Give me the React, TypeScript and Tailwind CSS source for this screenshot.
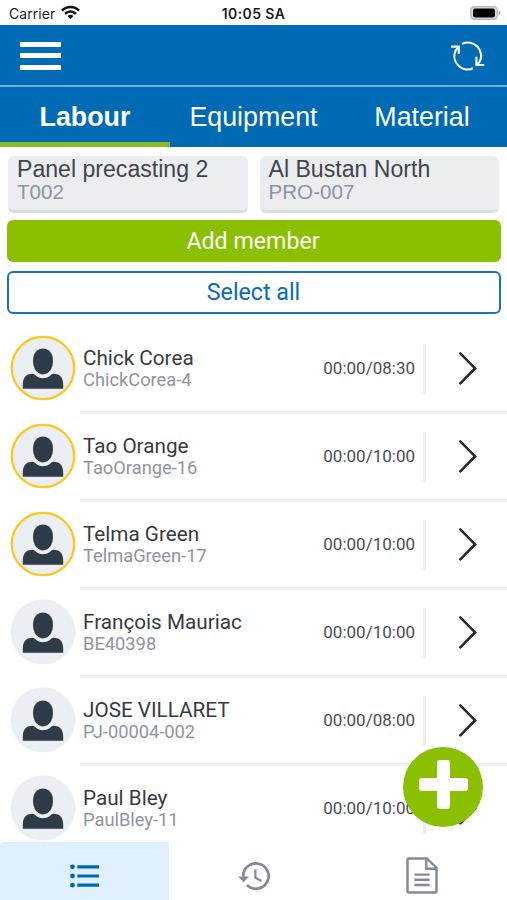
import React, { useState } from 'react'

type Member = {
  name: string;
  code: string;
  hours: string;
  active: boolean;
}

const MEMBERS: Member[] = [
  { name: "Chick Corea", code: "ChickCorea-4", hours: "00:00/08:30", active: true },
  { name: "Tao Orange", code: "TaoOrange-16", hours: "00:00/10:00", active: true },
  { name: "Telma Green", code: "TelmaGreen-17", hours: "00:00/10:00", active: true },
  { name: "François Mauriac", code: "BE40398", hours: "00:00/10:00", active: false },
  { name: "JOSE VILLARET", code: "PJ-00004-002", hours: "00:00/08:00", active: false },
  { name: "Paul Bley", code: "PaulBley-11", hours: "00:00/10:00", active: false },
];

const TABS: string[] = ["Labour", "Equipment", "Material"];

const StatusBar = () => (
  <div className="grid h-[25px] shrink-0 grid-cols-3 items-center bg-white pt-[3px] text-[#1c1c1c]">
    <div className="flex items-center pl-[9px]">
      <span className="font-[Inter,sans-serif] text-[14px] leading-none tracking-[0.05px]">Carrier</span>
      <svg className="-mt-[3px] ml-[6px]" width="19" height="15" viewBox="0 0 19 15" fill="none" stroke="#111" strokeWidth="2.5">
        <path d="M1 5.6C5.7 .7 13.3 .7 18 5.6" />
        <path d="M4.1 8.8c3-3.1 7.8-3.1 10.8 0" />
        <path d="M9.5 14 6.6 11.1c1.6-1.7 4.2-1.7 5.8 0z" fill="#111" stroke="none" />
      </svg>
    </div>
    <span className="text-center font-[Inter,sans-serif] text-[14px] font-semibold leading-none tracking-[0.4px]">10:05 SA</span>
    <div className="flex justify-end pr-[6px]">
      <svg className="-mt-[3px]" width="31" height="14" viewBox="0 0 31 14">
        <rect x=".7" y=".7" width="26.6" height="12.6" rx="3.6" fill="#ddd" stroke="#b5b5b5" strokeWidth="1.2" />
        <rect x="3" y="2.6" width="22" height="8.8" rx="1.8" fill="#000" />
        <path d="M28.6 4.6c2.4.9 2.4 3.9 0 4.8z" fill="#aaa" />
      </svg>
    </div>
  </div>
)

const Header = () => (
  <header className="flex h-[62px] shrink-0 items-center justify-between border-b-2 border-[#6aade6] bg-[#006ab5] pl-[20px] pr-[22px]">
    <button className="flex flex-col gap-[6.5px] pt-px">
      <span className="h-[5px] w-[41px] bg-white" />
      <span className="h-[5px] w-[41px] bg-white" />
      <span className="h-[5px] w-[41px] bg-white" />
    </button>
    <button className="pt-[2px]">
      <svg width="34" height="30" viewBox="0 0 34 30" fill="none" stroke="#fff" strokeWidth="2.1">
        <path d="M11 2.9A13.3 13.3 0 0 1 28.6 21" />
        <path d="M22 27.3A13.3 13.3 0 0 1 4.8 9.2L7.6 5.6" />
        <path d="M0 5.6h7.8V13" />
        <path d="M33.3 24h-7.9v-8.2M25.4 24l3.2-3" />
      </svg>
    </button>
  </header>
)

const Avatar = ({ active }: { active: boolean }) => (
  <svg className="shrink-0" width="66" height="66" viewBox="0 0 66 66">
    <circle cx="33" cy="33" r="32.4" fill="#ebeef2" />
    {active && <circle cx="33" cy="33" r="31.2" fill="none" stroke="#fac920" strokeWidth="2.3" />}
    <path
      d="M33 13.4c6.2 0 10 5 10 12.4C43 33.4 39 39.4 33 39.4S23 33.4 23 25.8C23 18.4 26.8 13.4 33 13.4z"
      fill="#313b47"
    />
    <path
      d="M12.8 53.8V49.4c0-6.6 3.6-10.6 9.4-10.6 1.4 0 2.2.6 3 1.4 4.6 4 11 4 15.6 0 .8-.8 1.6-1.4 3-1.4 5.8 0 9.4 4 9.4 10.6v4.4z"
      fill="#313b47"
    />
  </svg>
)

const MemberRow = ({ member }: { member: Member }) => (
  <div className="flex h-[88px] shrink-0 pl-[10px]">
    <div className="flex h-[84px] w-[70px] shrink-0 items-center">
      <Avatar active={member.active} />
    </div>
    <div className="flex flex-1 items-center border-b-[3px] border-[#eff2f3] pl-[3px]">
      <div className="flex-1 whitespace-nowrap pt-px">
        <p className="text-[20.7px] leading-[22px] text-[#373b40]">{member.name}</p>
        <p className="text-[18.3px] leading-[22px] text-[#90949f]">{member.code}</p>
      </div>
      <span className="text-[17px] text-[#4a4d51]">{member.hours}</span>
      <span className="ml-[8px] h-[50px] w-[3px] bg-[#eceef0]" />
      <svg className="-mt-px ml-[33px] mr-[30px]" width="18" height="34" viewBox="0 0 18 34" fill="none" stroke="#23272b" strokeWidth="2.5">
        <path d="M1.3 2.4 16.1 17.4 1.3 32.4" strokeLinecap="round" />
      </svg>
    </div>
  </div>
)

const InfoCard = ({ title, code }: { title: string; code: string }) => (
  <div className="h-[57px] flex-1 rounded-[6px] border-b-[3px] border-[#dadde2] bg-[#ebedf1] pl-[9px] pt-[2px] font-['Liberation_Sans',sans-serif]">
    <p className="text-[23.1px] leading-[23px] text-[#41454b]">{title}</p>
    <p className="text-[20.6px] leading-[22px] text-[#90949f]">{code}</p>
  </div>
)

const BottomNav = () => (
  <nav className="grid h-[58px] shrink-0 grid-cols-3 bg-white">
    <button className="flex items-center justify-center rounded-tl-[3px] bg-[#e0f0fe] pt-[9px]">
      <svg width="29" height="24" viewBox="0 0 29 24" fill="#0068b3">
        <circle cx="2.5" cy="2.8" r="2.4" />
        <circle cx="2.5" cy="12" r="2.4" />
        <circle cx="2.5" cy="21.2" r="2.4" />
        <path d="M7.3 1.2H29v3.2H7.3zM7.3 10.4H29v3.2H7.3zM7.3 19.6H29v3.2H7.3z" />
      </svg>
    </button>
    <button className="flex items-center justify-center pt-[9px]">
      <svg width="32" height="28" viewBox="0 0 32 28" fill="none" stroke="#85889a" strokeWidth="2.7">
        <path d="M5.2 14.5A12.7 12.7 0 1 1 8.9 23" />
        <path d="M0 14.6h11l-5.4 5.6z" fill="#85889a" stroke="none" />
        <path d="M17.4 7.6v8l6 3.4" strokeWidth="2.2" />
      </svg>
    </button>
    <button className="flex items-center justify-center pr-[2px] pt-[9px]">
      <svg width="32" height="37" viewBox="0 0 32 37" fill="none" stroke="#85889a" strokeWidth="2.4">
        <path d="M2.8 1.5H20.8L30.5 10.7V34.5a1 1 0 0 1-1 1H2.5a1 1 0 0 1-1-1v-32a1 1 0 0 1 1-1z" />
        <path d="M20.3 1.5V11.8H30.5" />
        <path d="M8.4 17.6h15.2M8.4 22.8h15.2M8.4 28h15.2" />
      </svg>
    </button>
  </nav>
)

const App = () => {

  const [tab, setTab] = useState<string>("Labour");

  return (
    <main className="relative flex h-[900px] w-[507px] flex-col overflow-hidden bg-white font-[Roboto,sans-serif]">
      <StatusBar />
      <Header />
      <div className="grid h-[60px] shrink-0 grid-cols-[170px_167px_170px] bg-[#006ab5] font-['Liberation_Sans',sans-serif] text-[26.8px] text-white">
        {TABS.map((item) => (
          <button
            key={item}
            onClick={() => setTab(item)}
            className={
              item === tab
                ? "border-b-[5px] border-[#8cb927] pt-[5px] font-bold"
                : "border-b-[5px] border-transparent pt-[5px]"
            }>
            {item}
          </button>
        ))}
      </div>
      <div className="flex shrink-0 gap-[12px] px-[8px] pt-[9px]">
        <InfoCard title="Panel precasting 2" code="T002" />
        <InfoCard title="Al Bustan North" code="PRO-007" />
      </div>
      <div className="mt-[7px] flex shrink-0 flex-col gap-[9px] pl-[7px] pr-[6px] text-[23.2px]">
        <button className="h-[42px] rounded-[6px] bg-[#8ac000] pr-[2px] pt-px text-white">Add member</button>
        <button className="h-[43px] rounded-[6px] border-2 border-[#1973b8] pr-px text-[#0b6bb3]">Select all</button>
      </div>
      <section className="mt-[12px] flex min-h-0 flex-1 flex-col overflow-hidden">
        {MEMBERS.map((member) => (
          <MemberRow member={member} key={member.code} />
        ))}
      </section>
      <BottomNav />
      <button className="absolute bottom-[73px] right-[24px] flex size-[80px] items-center justify-center rounded-full bg-[#8ac000]">
        <svg className="-mt-[5px]" width="49" height="49" viewBox="0 0 49 49" fill="#fff">
          <rect x="18" y="0" width="13" height="49" rx="3" />
          <rect x="0" y="18" width="49" height="13" rx="3" />
        </svg>
      </button>
    </main>
  );
}

export default App;
